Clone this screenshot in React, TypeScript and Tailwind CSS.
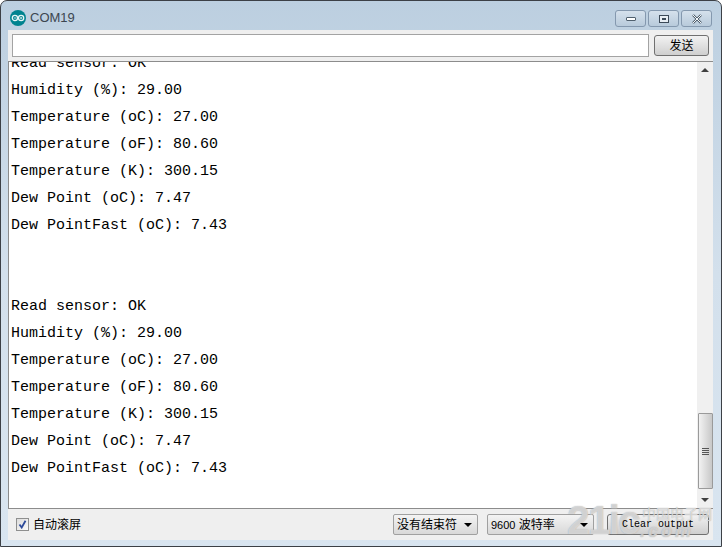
import React from 'react';

const sans = { fontFamily: '"Liberation Sans", "Noto Sans CJK SC", sans-serif' };

const block = [
  'Humidity (%): 29.00',
  'Temperature (oC): 27.00',
  'Temperature (oF): 80.60',
  'Temperature (K): 300.15',
  'Dew Point (oC): 7.47',
  'Dew PointFast (oC): 7.43',
];

const lines = ['Read sensor: OK', ...block, '', '', 'Read sensor: OK', ...block];

function ArduinoLogo() {
  return (
    <svg width="16" height="16" viewBox="0 0 16 16" className="shrink-0">
      <circle cx="8" cy="8" r="8" fill="#00838f" />
      <circle cx="4.9" cy="8" r="2.6" fill="none" stroke="#e8f6f6" strokeWidth="1.3" />
      <circle cx="11.1" cy="8" r="2.6" fill="none" stroke="#e8f6f6" strokeWidth="1.3" />
      <path d="M3.8 8h2.2M10 8h2.2M11.1 6.9v2.2" stroke="#e8f6f6" strokeWidth="0.8" />
    </svg>
  );
}

function WinButton({ children }: { children: React.ReactNode }) {
  return (
    <div className="w-[31px] h-[17px] flex items-center justify-center rounded-[3px] border border-[#8498ae] bg-gradient-to-b from-[#d5e1ec] to-[#b8cadb]">
      {children}
    </div>
  );
}

function Combo({ w, children }: { w: string; children: React.ReactNode }) {
  return (
    <div className={`${w} h-[21px] flex items-center justify-between pl-[3px] pr-[5px] rounded-[2px] border border-[#a0a0a0] bg-gradient-to-b from-[#f4f4f4] to-[#d8d8d8] text-[12px] text-black`}>
      <span className="whitespace-nowrap">{children}</span>
      <span className="relative z-10 w-0 h-0 border-x-[4px] border-x-transparent border-t-[4px] border-t-black" />
    </div>
  );
}

export default function App() {
  return (
    <div className="relative w-[722px] h-[548px] overflow-hidden bg-white" style={sans}>
      <div className="w-full h-[547px] flex flex-col rounded-t-[7px] border border-[#3c4046] bg-gradient-to-b from-[#bccfe0] via-[#d3e0ec] to-[#d9e5f0] pl-[7px] pr-[8px]">
        {/* Title bar */}
        <div className="h-[29px] shrink-0 flex items-center pl-[2px] pt-[5px]">
          <ArduinoLogo />
          <span className="ml-[4px] text-[13px] text-[#3c4650]">COM19</span>
          <div className="ml-auto flex gap-[2px] mr-[1px] mt-[1px]">
            <WinButton>
              <span className="w-[10px] h-[4px] rounded-[1px] border border-[#50606e] bg-white" />
            </WinButton>
            <WinButton>
              <span className="w-[10px] h-[8px] border border-[#3c4a58] bg-[#e8eef4] flex items-center justify-center">
                <span className="w-[4px] h-[2px] bg-[#3c4a58]" />
              </span>
            </WinButton>
            <WinButton>
              <svg width="12" height="10" viewBox="0 0 12 10">
                <path d="M2 1l8 8M10 1L2 9" stroke="#4c5a68" strokeWidth="2.4" />
                <path d="M2 1l8 8M10 1L2 9" stroke="#f4f8fb" strokeWidth="1" />
              </svg>
            </WinButton>
          </div>
        </div>

        {/* Send row */}
        <div className="h-[31px] shrink-0 flex items-start gap-[5px] bg-[#efefef] px-[4px] pt-[4px]">
          <div className="w-[637px] h-[23px] bg-white border border-[#a3a3a3]" />
          <div className="w-[55px] h-[21px] mt-[1px] flex items-center justify-center rounded-[3px] border border-[#707070] bg-gradient-to-b from-[#f2f2f2] to-[#cfcfcf] text-[12px] text-black">
            发送
          </div>
        </div>

        {/* Output */}
        <div className="h-[448px] shrink-0 flex border border-[#8c8c8c] border-r-0 bg-white">
          <div className="flex-1 overflow-hidden">
            <div className="-mt-[12px] pl-[2px] text-[15px] leading-[27px] text-black" style={{ fontFamily: '"Liberation Mono", monospace' }}>
              {lines.map((line, i) => (
                <div key={i} className="h-[27px] whitespace-pre">{line}</div>
              ))}
            </div>
          </div>
          <div className="w-[16px] flex flex-col items-center bg-[#f0f0f0]">
            <span className="mt-[6px] w-0 h-0 border-x-[4px] border-x-transparent border-b-[4px] border-b-[#404040]" />
            <div className="mt-[341px] w-[15px] h-[76px] flex flex-col items-center justify-center gap-[1px] rounded-[1px] border border-[#9a9a9a] bg-gradient-to-r from-[#f2f2f2] to-[#c8c8c8]">
              <span className="w-[7px] h-[1px] bg-[#555]" />
              <span className="w-[7px] h-[1px] bg-[#555]" />
              <span className="w-[7px] h-[1px] bg-[#555]" />
              <span className="w-[7px] h-[1px] bg-[#555]" />
            </div>
            <span className="mt-[9px] w-0 h-0 border-x-[4px] border-x-transparent border-t-[4px] border-t-[#404040]" />
          </div>
        </div>

        {/* Bottom bar */}
        <div className="h-[31px] shrink-0 flex items-center bg-[#efefef] pl-[8px] pr-[4px]">
          <div className="w-[13px] h-[13px] flex items-center justify-center border border-[#8e8f8f] bg-gradient-to-br from-[#dcdcdc] to-[#fafafa]">
            <svg width="9" height="9" viewBox="0 0 9 9">
              <path d="M1.5 4.5L3.7 7.5L7.5 0.8" fill="none" stroke="#2c4a9a" strokeWidth="1.8" />
            </svg>
          </div>
          <span className="ml-[4px] text-[12px] text-black">自动滚屏</span>
          <div className="ml-auto flex items-center">
            <Combo w="w-[85px]">没有结束符</Combo>
            <div className="w-[9px]" />
            <Combo w="w-[107px]">
              <span className="text-[11px]">9600</span> 波特率
            </Combo>
            <div className="w-[13px]" />
            <div className="w-[102px] h-[21px] flex items-center justify-center rounded-[3px] border border-[#707070] bg-gradient-to-b from-[#f2f2f2] to-[#cfcfcf] text-[10px] text-black" style={{ fontFamily: '"Liberation Mono", monospace' }}>
              <span className="relative z-10">Clear output</span>
            </div>
          </div>
        </div>
      </div>

      {/* watermark over the corner */}
      <div className="absolute left-[567px] top-[500px] text-[41px] leading-none font-bold text-white/55 tracking-[-2px] [text-shadow:0_0_1px_#999]" style={{ fontFamily: '"Liberation Sans", sans-serif' }}>
        21ic
      </div>
      <div className="absolute left-[642px] top-[506px] text-[14px] leading-none text-white/60 whitespace-nowrap [text-shadow:0_0_1px_#999]" style={{ fontFamily: '"Noto Sans CJK SC", sans-serif' }}>
        中国电子网
      </div>
      <div className="absolute left-[640px] top-[522px] text-[18px] leading-none font-bold italic text-white/50 tracking-[3px] [text-shadow:0_0_1px_#999]" style={{ fontFamily: '"Liberation Sans", sans-serif' }}>
        .com
      </div>
    </div>
  );
}
